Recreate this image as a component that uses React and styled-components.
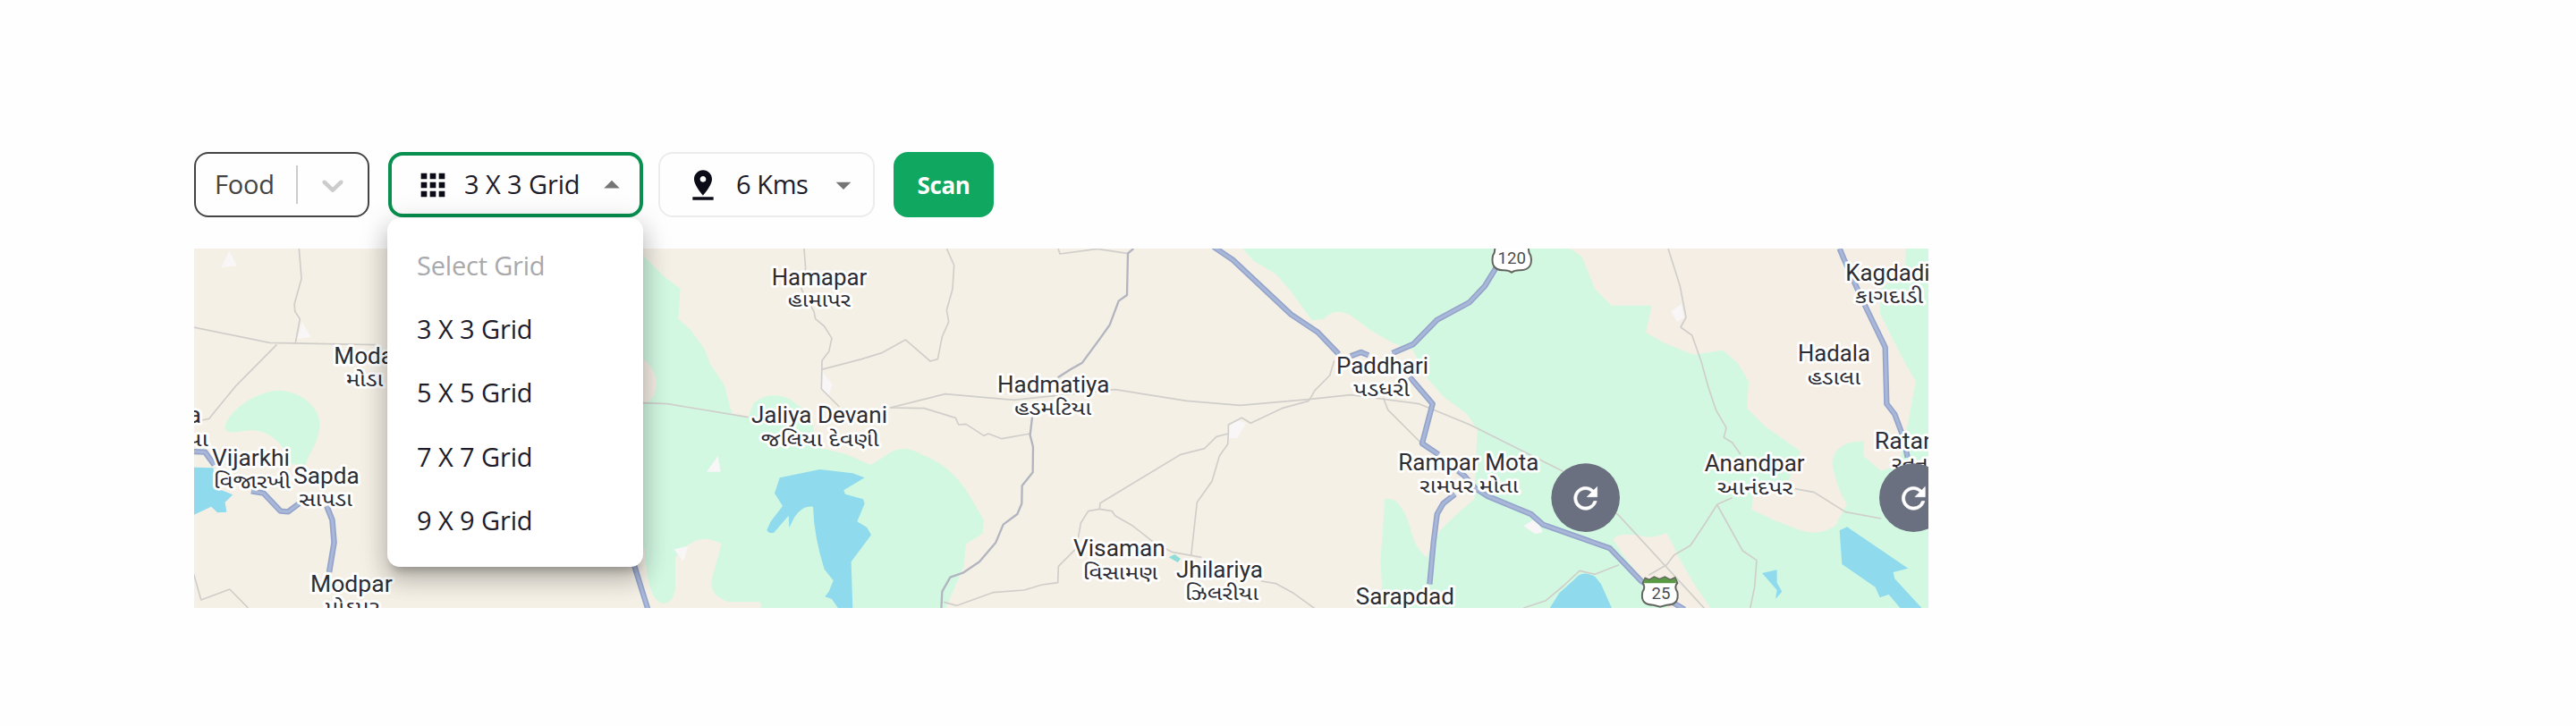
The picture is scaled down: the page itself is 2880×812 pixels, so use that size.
import React from "react";
import styled, { createGlobalStyle, css } from "styled-components";

const GlobalStyle = createGlobalStyle`
  * { box-sizing: border-box; }
  body { margin: 0; background: #fefefe; }
`;

const Page = styled.main`
  display: flex;
  flex-direction: column;
  gap: 35px;
  height: 812px;
  padding: 170px 724px 132px 217px;
  overflow: hidden;
  font-family: "Open Sans", "Noto Sans", sans-serif;
`;

const Toolbar = styled.div`
  display: flex;
  height: 73px;
`;

const Field = styled.div`
  position: relative;
  display: flex;
  align-items: center;
  height: 73px;
  width: ${(p) => p.$width}px;
  margin-right: ${(p) => p.$after}px;
  border: ${(p) => p.$line}px solid ${(p) => p.$tone};
  border-radius: 16px;
  background: #fefefe;
`;

const Value = styled.span`
  width: ${(p) => p.$width}px;
  margin-left: ${(p) => p.$before}px;
  padding-bottom: 1px;
  font-size: 29px;
  line-height: 40px;
  letter-spacing: ${(p) => p.$track}px;
  color: ${(p) => p.$tone || "#1d1b29"};
  white-space: nowrap;
`;

const Divider = styled.span`
  width: 2px;
  height: 43px;
  margin-left: 23px;
  background: #cccccc;
`;

const Glyph = styled.svg`
  flex: none;
  width: ${(p) => p.$size || 40}px;
  height: ${(p) => p.$size || 40}px;
  margin-left: ${(p) => p.$before || 0}px;
  fill: ${(p) => p.$tone || "#0c0c18"};
`;

const ScanButton = styled.button`
  width: 112px;
  height: 73px;
  padding: 0;
  border: 0;
  border-radius: 16px;
  background: #10a760;
  color: #fff;
  font: 700 26px/40px "Open Sans", sans-serif;
  letter-spacing: -0.4px;
`;

const Menu = styled.ul`
  position: absolute;
  z-index: 2;
  top: 70px;
  left: -5px;
  width: 286px;
  height: 390px;
  margin: 0;
  padding: 17px 0 15px;
  list-style: none;
  border-radius: 14px;
  background: #fff;
  box-shadow: 0 10px 10px -6px rgba(0, 0, 0, 0.22), 0 14px 24px 2px rgba(0, 0, 0, 0.16),
    0 6px 32px 4px rgba(0, 0, 0, 0.12);
`;

const MenuItem = styled.li`
  display: flex;
  align-items: center;
  height: 71.2px;
  padding-left: 33px;
  font-size: 29px;
  letter-spacing: -0.1px;
  color: #1d1b29;
  ${(p) =>
    p.$muted &&
    css`
      color: #a9a9ab;
      letter-spacing: -0.2px;
    `}
`;

const MapFrame = styled.section`
  flex: none;
  width: 1939px;
  height: 402px;
  overflow: hidden;
  background: #f5f0e6;
`;

const MapCanvas = styled.svg`
  display: block;
  width: 100%;
  height: 100%;
`;

const Land = styled.path`
  fill: ${(p) => ({ park: "#d2f8e2", town: "#f5eee5", water: "#90daee", spot: "#f8f6f6" })[p.$kind]};
`;

const Road = styled.path`
  fill: none;
  stroke-linejoin: round;
  stroke: ${(p) => ({ highway: "#94a4cb", main: "#b2b5c0", local: "#d0ceca" })[p.$kind]};
  stroke-width: ${(p) => ({ highway: 19, main: 7, local: 5 })[p.$kind]};
`;

const RoadCore = styled.path`
  fill: none;
  stroke: #a9b7d8;
  stroke-width: 9;
  stroke-linejoin: round;
`;

const PlaceName = styled.text`
  font-family: Roboto, sans-serif;
  font-size: 75px;
  fill: #2d2d34;
  stroke: #fff;
  stroke-width: 16px;
  stroke-linejoin: round;
  paint-order: stroke;
`;

const LocalName = styled(PlaceName)`
  font-family: "Noto Sans Gujarati", "Noto Sans", sans-serif;
  font-size: 66px;
`;

const ShieldText = styled.text`
  font: 400 56px Roboto, sans-serif;
  fill: #4b4c50;
  text-anchor: middle;
`;

const PARKS = [
  "M20 40L75 95L130 150L182 188L175 290L215 325L262 390L282 442L330 512L350 590L358 608L410 620L428 572Q480 528 550 560L620 610L640 720L740 745L820 780L868 750Q925 705 990 745Q1090 780 1150 880L1200 965L1195 1012L1140 1045L1133 1120L1070 1265L455 1265L450 1240L345 1240Q280 1220 287 1165L320 1045Q250 1005 195 1060L165 1090L165 1190Q160 1245 120 1245Q70 1230 62 1060L-30 1060L-30 40Z",
  "M2065 50L2105 95L2180 140L2232 200L2300 295L2340 290Q2380 245 2440 285L2500 330L2570 370L2640 395L2680 480L2740 550L2820 610L2855 660L2845 895L2780 950L2730 1000L2685 1090Q2645 1060 2630 990Q2595 880 2545 895L2538 1000L2530 1100L2535 1180L2530 1265L4380 1265L4380 50Z",
];
const WEST_PARK =
  "M150 710C165 650 260 590 330 590C400 595 462 650 457 710C450 780 420 800 412 840L368 838C340 770 300 728 240 724C200 724 150 745 150 710Z";
const TOWNS = [
  "M20 400Q100 440 102 510Q95 570 60 570L20 570Z",
  "M3160 50L3205 80L3225 130L3250 190L3305 245L3440 245L3430 290L3420 335L3480 370L3580 410L3680 395L3730 440L3765 500L3760 590L3820 650L3940 735L3900 830L3780 880L3775 930L3850 965L3940 1000Q4000 1020 4055 985L4095 912Q4060 860 4045 775Q4050 720 4105 705L4150 700L4150 750L4210 800L4270 780L4300 640L4325 500L4280 420L4245 350L4205 270L4210 190L4290 120L4293 50Z",
  "M3310 1030Q3330 1005 3400 1018Q3440 1030 3490 1008L3512 1050L3530 1090L3580 1175L3640 1265L3500 1265L3420 1180L3350 1090Z",
];
const WATERS = [
  "M515 823L650 795L760 808L800 823L730 865L735 878L795 895L800 910L775 970L808 990L822 1015L755 1105L760 1265L714 1265L690 1230L667 1222L680 1205L695 1168L665 1130Q630 1020 627 920Q590 915 565 955L547 990L545 950L495 1008Q475 1010 472 998L485 970L525 918L498 875Z",
  "M3095 1265L3130 1210L3180 1165Q3205 1130 3250 1155L3270 1180L3308 1265Z",
  "M3810 1143L3860 1132L3860 1175L3877 1205L3855 1230L3860 1200Z",
  "M4070 1000L4095 988L4300 1127L4250 1140L4255 1162L4350 1265L4275 1262L4235 1215L4205 1225L4190 1190L4078 1113Z",
];
const SPOTS = [
  "M270 803L308 750L317 803Z",
  "M160 1063L208 1052L192 1103Z",
  "M660 470L692 510L680 545L655 525Z",
  "M2022 650L2050 630L2080 640L2050 690L2020 690Z",
  "M3010 985L3050 960L3075 1005L3050 1012Z",
  "M3505 265L3540 240L3548 285L3525 300Z",
];
const LOCAL_ROADS = [
  "M597 54L602 120L588 190L630 265L635 290L665 315L690 355L680 400L657 430L655 525L715 585",
  "M655 460L790 425L860 403L937 360L1020 432L1045 425L1060 350L1082 300L1075 260L1095 190L1100 110L1075 54",
  "M55 572L140 575L410 620",
  "M885 588L1070 542L1300 562L1640 527L1880 565L2060 580L2290 560L2430 545L2660 575L2830 645L3140 800L3330 950L3620 1265",
  "M885 588L1000 590L1105 622L1115 645L1140 643L1200 682L1215 675L1260 692L1355 675",
  "M2375 430L2360 480L2310 530L2290 565L2200 590L2095 640L2065 622L2020 645L2020 675L1980 685L1940 725L1860 745L1590 908L1588 928L1550 935L1525 975L1510 1060L1450 1120L1448 1175L1395 1182L1335 1200L1230 1208L1110 1252L1065 1240",
  "M2020 675L2018 710L1990 750L1965 835L1915 905L1895 1085",
  "M1588 928L1630 935L1640 950L1700 985L1770 1040L1830 1072L1930 1090",
  "M2130 1170L2180 1178L2235 1208L2310 1262",
  "M2540 555L2555 595L2665 705",
  "M1448 50L1455 72L1580 55L1680 70",
  "M3495 54L3535 180L3555 285L3537 318L3575 345L3605 430L3630 520L3655 595L3690 655L3682 688L3710 705L3738 745",
  "M3920 860L3985 872L4090 938L4210 960",
  "M3710 890L3660 912L3620 975L3570 1050L3515 1082L3490 1115L3430 1150",
  "M3660 915L3745 1068L3792 1100L3785 1190L3770 1262",
  "M3010 1260L3085 1235L3145 1185L3198 1135L3250 1147L3330 1115",
];
const MAIN_ROADS = [
  "M1702 54L1683 70L1680 210L1652 230L1622 310L1590 355L1530 437L1490 460L1448 487",
  "M1362 620L1355 680L1365 720L1364 805L1328 850L1327 910L1312 945L1265 980L1240 1040L1185 1105L1130 1142L1087 1157L1060 1205L1057 1265",
];
const HIGHWAYS = [
  "M25 1110L75 1270",
  "M1970 48L2035 92L2230 275L2320 335L2390 408",
  "M2430 415L2465 402L2490 412",
  "M2570 405L2640 375L2720 293L2828 235L2880 180L2918 118",
  "M2628 485L2705 575L2670 708L2725 745",
  "M2790 800L2810 815L2850 860L2890 885L3035 945L3075 980L3300 1060L3405 1170L3500 1235L3550 1265",
  "M2780 878L2740 910L2720 945L2708 1040L2695 1180",
  "M4070 54L4085 90L4130 190L4160 255L4223 385L4228 575L4255 610L4285 690L4298 755",
];
const WEST_LOCAL_ROADS = [
  "M390 112L398 215L375 300L377 325L393 350L378 433",
  "M48 378L295 430L640 437",
  "M318 436L185 575L125 650L98 685L75 690",
  "M48 1205L72 1293L165 1257L225 1320",
];
const WEST_HIGHWAYS = [
  "M45 795L85 797L115 840",
  "M235 928L275 935L330 995L355 997L390 970",
  "M480 978L498 1025L504 1100L488 1200",
];

const PLACES = [
  ["Hamapar", 493, 178, 312, "હામાપર", 545, 250, 205],
  ["Jaliya Devani", 425, 640, 448, "જલિયા દેવણી", 455, 717, 390],
  ["Hadmatiya", 1250, 537, 368, "હડમટિયા", 1305, 612, 253],
  ["Visaman", 1505, 1087, 300, "વિસામણ", 1535, 1163, 245],
  ["Jhilariya", 1850, 1158, 283, "ઝિલરીયા", 1878, 1233, 240],
  ["Paddhari", 2387, 473, 301, "પડધરી", 2443, 548, 182],
  ["Rampar Mota", 2595, 797, 463, "રામપર મોતા", 2665, 872, 325],
  ["Sarapdad", 2452, 1247, 323],
  ["Anandpar", 3622, 802, 328, "આનંદપર", 3662, 880, 248],
  ["Hadala", 3935, 432, 235, "હડાલા", 3965, 510, 172],
  ["Kagdadi", 4095, 162, 275, "કાગદાડી", 4125, 238, 223],
  ["Ratanpar", 4192, 725, 315, "રતનપર", 4248, 797, 195],
  ["Moda", -975, 440, 192, "મોડા", -937, 517, 119],
  ["a", -1465, 640, 37, "યા", -1470, 716, 66],
  ["Vijarkhi", -1384, 783, 253, "વિજારખી", -1381, 858, 253],
  ["Sapda", -1110, 843, 212, "સાપડા", -1094, 918, 173],
  ["Modpar", -1054, 1205, 267, "મોડપર", -1009, 1280, 179],
];

const MENU_ITEMS = ["Select Grid", "3 X 3 Grid", "5 X 5 Grid", "7 X 7 Grid", "9 X 9 Grid"];

function Place({ place }) {
  const [name, x, y, w, local, lx, ly, lw] = place;
  return (
    <g>
      <PlaceName x={x - 5} y={y} textLength={w + 8} lengthAdjust="spacingAndGlyphs">{name}</PlaceName>
      {local && (
        <LocalName x={lx - 3} y={ly} textLength={lw + 6} lengthAdjust="spacingAndGlyphs">{local}</LocalName>
      )}
    </g>
  );
}

function RefreshPin({ x, y }) {
  return (
    <g transform={`translate(${x} ${y})`}>
      <circle r="115" fill="#6b7080" />
      <path
        transform="scale(4.85) translate(-12 -11.6)"
        fill="#fff"
        stroke="#fff"
        strokeWidth="0.4"
        d="M17.65 6.35A7.958 7.958 0 0 0 12 4c-4.42 0-7.99 3.58-7.99 8s3.57 8 7.99 8c3.73 0 6.84-2.55 7.73-6h-2.08A5.99 5.99 0 0 1 12 18c-3.31 0-6-2.69-6-6s2.69-6 6-6c1.66 0 3.14.69 4.22 1.78L13 11h7V4l-2.35 2.35z"
      />
    </g>
  );
}

function Highway({ d }) {
  return (
    <>
      <Road $kind="highway" d={d} />
      <RoadCore d={d} />
    </>
  );
}

const WEST = "translate(-1500 -60) scale(1.033 1)";

function AreaMap() {
  return (
    <MapFrame>
      <MapCanvas viewBox="-1449 54 5817 1206" preserveAspectRatio="none">
        {PARKS.map((d) => <Land key={d} $kind="park" d={d} />)}
        {TOWNS.map((d) => <Land key={d} $kind="town" d={d} />)}
        {WATERS.map((d) => <Land key={d} $kind="water" d={d} />)}
        {SPOTS.map((d) => <Land key={d} $kind="spot" d={d} />)}
        <path d="M1820 1090L1840 1080L1860 1095L1850 1107Z" fill="#8fdcd9" />
        <g transform={WEST}>
          <Land $kind="park" d={WEST_PARK} />
          <Land $kind="water" d="M40 848L112 850L115 915L175 940L150 965L155 998L125 1000L105 980L40 1012Z" />
          <Land $kind="spot" d="M138 177L163 122L188 172Z" />
          <Land $kind="spot" d="M400 360L428 410L385 418Z" />
          {WEST_LOCAL_ROADS.map((d) => <Road key={d} $kind="local" d={d} />)}
          {WEST_HIGHWAYS.map((d) => <Highway key={d} d={d} />)}
        </g>
        {LOCAL_ROADS.map((d) => <Road key={d} $kind="local" d={d} />)}
        {MAIN_ROADS.map((d) => <Road key={d} $kind="main" d={d} />)}
        {HIGHWAYS.map((d) => <Highway key={d} d={d} />)}
        {PLACES.map((p) => <Place key={p[0]} place={p} />)}
        <path
          d="M2912 40Q2918 62 2907 78Q2898 125 2940 127Q2960 126 2970 134Q2980 126 3000 127Q3044 124 3034 78Q3022 62 3030 40Z"
          fill="#fff" stroke="#63665f" strokeWidth="6"
        />
        <ShieldText x="2971" y="104">120</ShieldText>
        <path
          d="M3418 1160L3432 1166L3448 1156L3466 1164L3484 1156L3502 1166L3518 1158L3526 1176Q3514 1190 3526 1206Q3534 1250 3490 1250L3468 1256L3446 1250Q3400 1250 3409 1206Q3420 1190 3410 1176Z"
          fill="#fff" stroke="#63665f" strokeWidth="6"
        />
        <path d="M3416 1162L3432 1167L3448 1157L3466 1165L3484 1157L3502 1167L3518 1160L3522 1177L3414 1177Z" fill="#5b9a45" />
        <ShieldText x="3471" y="1230">25</ShieldText>
        <RefreshPin x={3218} y={890} />
        <RefreshPin x={4318} y={890} />
      </MapCanvas>
    </MapFrame>
  );
}

export default function App() {
  return (
    <>
      <GlobalStyle />
      <Page>
        <Toolbar>
          <Field $width={196} $after={21} $line={2} $tone="#444444">
            <Value $before={21} $width={68} $track={-0.2} $tone="#444444">Food</Value>
            <Divider />
            <Glyph $before={19} viewBox="0 0 20 20" $tone="#cccccc">
              <path d="M4.516 7.548c0.436-0.446 1.043-0.481 1.576 0l3.908 3.747 3.908-3.747c0.533-0.481 1.141-0.446 1.574 0 0.436 0.445 0.408 1.197 0 1.615-0.406 0.418-4.695 4.502-4.695 4.502-0.217 0.223-0.502 0.335-0.787 0.335s-0.57-0.112-0.789-0.335c0 0-4.287-4.084-4.695-4.502s-0.436-1.17 0-1.615z" />
            </Glyph>
          </Field>
          <Field $width={285} $after={17} $line={4} $tone="#07904f">
            <Glyph $before={26} viewBox="0 0 24 24">
              <path d="M4 8h4V4H4v4zm6 12h4v-4h-4v4zm-6 0h4v-4H4v4zm0-6h4v-4H4v4zm6 0h4v-4h-4v4zm6-10v4h4V4h-4zm-6 4h4V4h-4v4zm6 6h4v-4h-4v4zm0 6h4v-4h-4v4z" />
            </Glyph>
            <Value $before={15} $width={133} $track={-0.1}>3 X 3 Grid</Value>
            <Glyph $before={11} $size={42} viewBox="0 0 24 24" $tone="#757575">
              <path d="M7 14l5-5 5 5z" />
            </Glyph>
            <Menu>
              {MENU_ITEMS.map((label, i) => (
                <MenuItem key={label} $muted={i === 0}>{label}</MenuItem>
              ))}
            </Menu>
          </Field>
          <Field $width={242} $after={21} $line={2} $tone="#ececec">
            <Glyph $before={28} viewBox="0 0 24 24">
              <path d="M18 8c0-3.31-2.69-6-6-6S6 4.69 6 8c0 4.5 6 11 6 11s6-6.5 6-11zm-8 0c0-1.1.9-2 2-2s2 .9 2 2a2 2 0 0 1-4 0zM5 20v2h14v-2H5z" />
            </Glyph>
            <Value $before={17} $width={82} $track={-0.4}>6 Kms</Value>
            <Glyph $before={18} viewBox="0 0 24 24" $tone="#757575">
              <path d="M7 10l5 5 5-5z" />
            </Glyph>
          </Field>
          <ScanButton>Scan</ScanButton>
        </Toolbar>
        <AreaMap />
      </Page>
    </>
  );
}
